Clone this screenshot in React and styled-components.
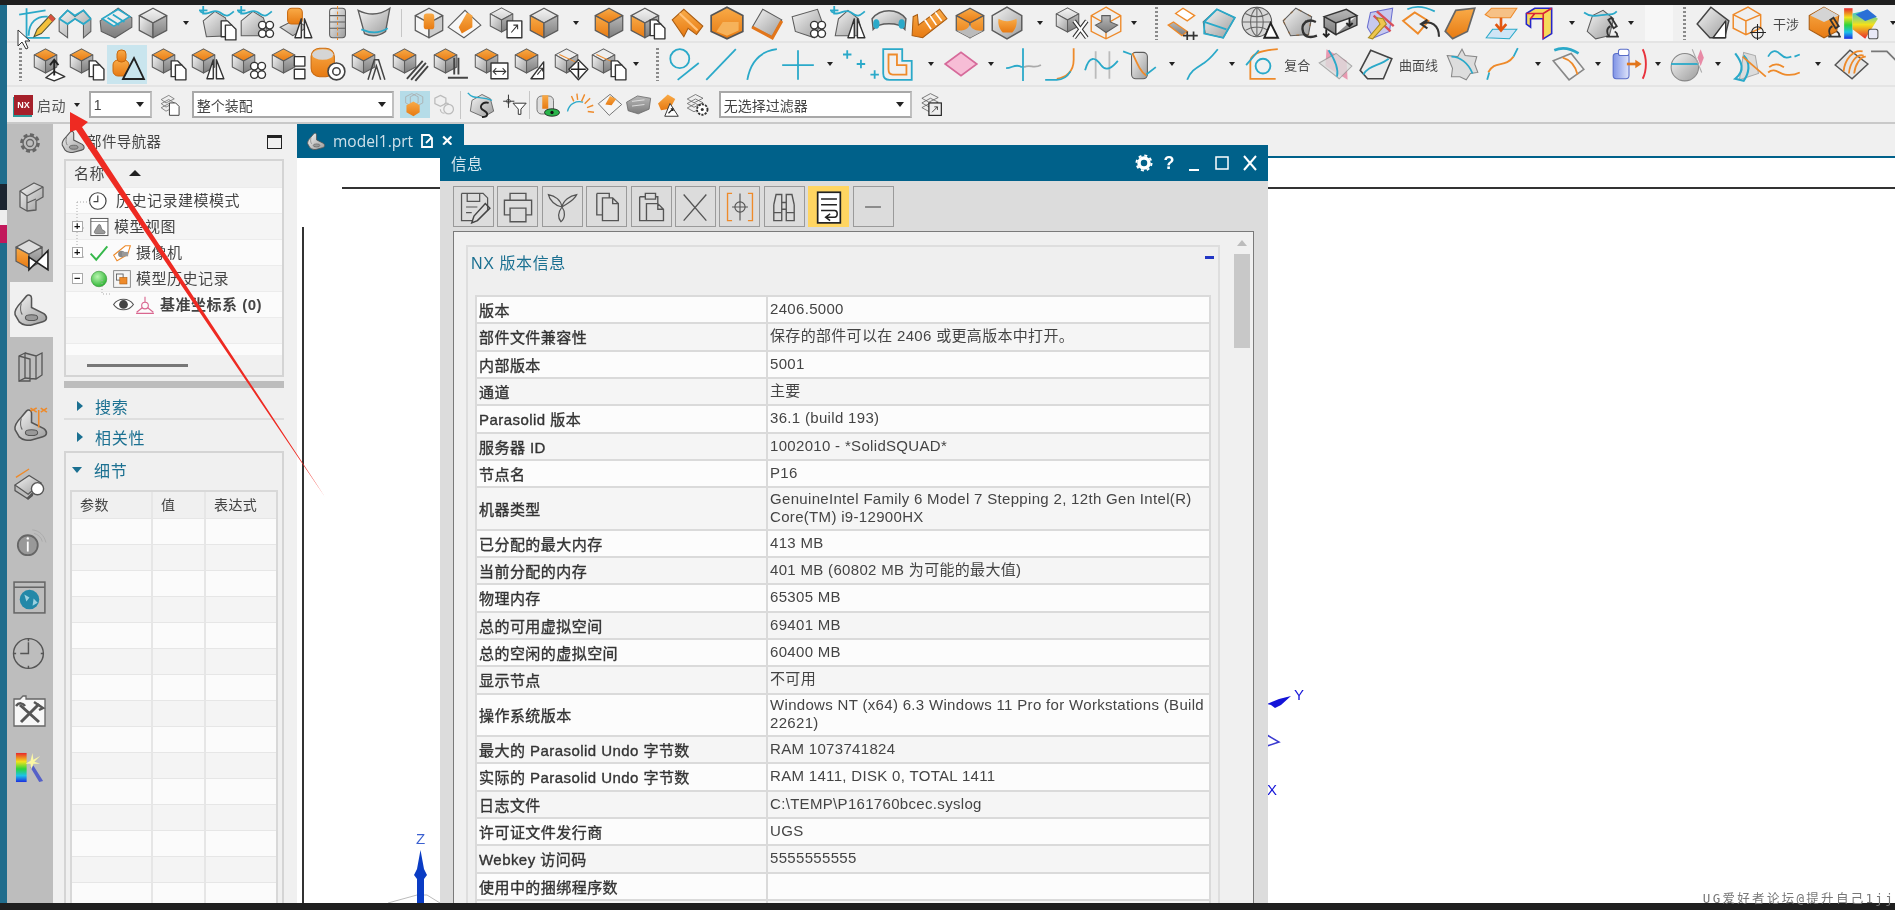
import React from "react";
import styled, { createGlobalStyle } from "styled-components";

const UI_FONT = `"Liberation Sans", "Noto Sans CJK SC", sans-serif`;
const BLUE = "#2aa9c9";
const ORANGE = "#ee8a2a";
const TEAL = "#00618a";

const GlobalStyle = createGlobalStyle`
  html, body { margin: 0; padding: 0; width: 1895px; height: 910px; overflow: hidden; background: #222; }
  #root { width: 1895px; height: 910px; }
  * { box-sizing: border-box; }
`;

const Frame = styled.div`
  position: relative;
  width: 1895px;
  height: 910px;
  overflow: hidden;
  display: flex;
  flex-direction: column;
  font-family: ${UI_FONT};
  color: #444;
  background: #f0f0f0;
  filter: blur(0.45px);
`;
const BlackBar = styled.div`
  flex: none;
  height: ${(p) => p.$h}px;
  background: #1f1f1f;
`;
const Middle = styled.div`
  flex: 1;
  min-height: 0;
  display: flex;
`;
const DesktopStrip = styled.div`
  flex: none;
  width: 7px;
  background: linear-gradient(to bottom, #1f6c8c 0 179px, #1b2430 179px 205px, #eee 205px 220px, #c2185b 220px 238px, #1f6c8c 238px);
`;
const Main = styled.div`
  flex: 1;
  min-width: 0;
  display: flex;
  flex-direction: column;
`;

/* ---- ribbon ---- */
const Ribbon = styled.div`
  flex: none;
  height: 119px;
  border-bottom: 2px solid #c9c9c9;
`;
const ToolRow = styled.div`
  display: flex;
  align-items: center;
  height: ${(p) => p.$h}px;
  border-bottom: ${(p) => (p.$line ? "2px solid #e4e4e4" : "none")};
`;
const Cell = styled.div`
  flex: none;
  width: ${(p) => p.$w}px;
  height: 100%;
  display: flex;
  align-items: center;
  justify-content: center;
  background: ${(p) => (p.$gap ? "#f7f7f7" : "transparent")};
`;
const ToolGlyph = styled.svg`
  flex: none;
  width: ${(p) => p.$s || 38}px;
  height: ${(p) => Math.round((p.$s || 38) * 0.89)}px;
  display: block;
  overflow: visible;
`;
const Hot = styled.div`
  width: 40px;
  height: 39px;
  display: flex;
  align-items: center;
  justify-content: center;
  background: #c9e5ee;
`;
const Caret = styled.i`
  display: block;
  width: 0;
  height: 0;
  border: 3.5px solid transparent;
  border-top: 4px solid #222;
  border-bottom: 0;
`;
const ComboCaret = styled(Caret)`
  border-width: 4.5px;
  border-top-width: 5px;
  border-bottom-width: 0;
`;
const Grip = styled.i`
  display: block;
  width: 3px;
  height: 33px;
  background: repeating-linear-gradient(to bottom, #8a8a8a 0 2px, transparent 2px 4px);
`;
const VRule = styled.i`
  display: block;
  width: 1px;
  height: 28px;
  background: #c6c6c6;
`;
const RowLabel = styled.span`
  font-size: 13px;
  white-space: nowrap;
  color: #4a4a4a;
`;
const ComboBox = styled.div`
  flex: none;
  width: ${(p) => p.$w}px;
  height: 27px;
  background: #fff;
  border: 2px solid #a8a8a8;
  border-right-color: #c0c0c0;
  display: flex;
  align-items: center;
  justify-content: space-between;
  padding: 0 6px 0 3px;
  font-size: 14px;
  color: #444;
`;
const HotSmall = styled(Hot)`
  width: 30px;
  height: 27px;
  background: #b5dce8;
`;
const NxLogo = styled.div`
  flex: none;
  width: 19px;
  height: 20px;
  background: #a5202a;
  color: #fff;
  font-size: 9px;
  font-weight: bold;
  text-align: center;
  line-height: 20px;
  box-shadow: -1px 2px 0 #2f9a9a;
`;
const StartLabel = styled.span`
  font-size: 14px;
  color: #555;
  letter-spacing: 0.4px;
`;

/* ---- workspace ---- */
const Workspace = styled.div`
  flex: 1;
  min-height: 0;
  display: flex;
`;
const Rail = styled.div`
  flex: none;
  width: 46px;
  background: #bdbdbd;
  display: flex;
  flex-direction: column;
`;
const RailTab = styled.div`
  flex: none;
  height: ${(p) => p.$h}px;
  margin-left: 3px;
  display: flex;
  align-items: center;
  justify-content: center;
  padding-right: 3px;
  background: ${(p) => (p.$active ? "#f0f0f0" : "transparent")};
`;
const NavPanel = styled.div`
  flex: none;
  width: 244px;
  padding: 0 13px 0 11px;
  background: #f0f0f0;
  display: flex;
  flex-direction: column;
`;
const NavHead = styled.div`
  flex: none;
  height: 35px;
  display: flex;
  align-items: center;
  font-size: 14.5px;
  color: #444;
  letter-spacing: 0.4px;
  span { flex: 1; margin: 0 0 2px 1px; }
  svg { flex: none; margin-left: -4px; }
`;
const MaxBox = styled.i`
  display: block;
  width: 15px;
  height: 14px;
  margin-right: 2px;
  border: 1.5px solid #222;
  border-top-width: 3px;
`;
const TreeBox = styled.div`
  flex: none;
  position: relative;
  height: 218px;
  border: 2px solid #d4d4d4;
  background: #f0f0f0;
  display: flex;
  flex-direction: column;
`;
const TreeHead = styled.div`
  flex: none;
  height: 26px;
  display: flex;
  align-items: center;
  gap: 24px;
  padding: 0 0 3px 8px;
  font-size: 15px;
  letter-spacing: 0.5px;
  color: #444;
  i { width: 0; height: 0; border: 6px solid transparent; border-bottom: 6px solid #222; border-top: 0; margin-top: 1px; }
`;
const TreeRow = styled.div`
  flex: none;
  height: 26px;
  position: relative;
  display: flex;
  align-items: center;
  padding-left: ${(p) => p.$indent}px;
  gap: ${(p) => p.$gap || 3}px;
  font-size: 15px;
  letter-spacing: 0.5px;
  font-weight: ${(p) => (p.$bold ? "bold" : "normal")};
  color: #444;
  white-space: nowrap;
  background: ${(p) => (p.$odd ? "#fbfbfb" : "#f5f5f5")};
  border-top: 1px solid #ececec;
`;
const TreeShort = styled(TreeRow)`
  height: 12px;
`;
const TreeText = styled.span`
  margin-left: ${(p) => p.$m || 0}px;
  margin-bottom: 3px;
`;
const Expander = styled.i`
  flex: none;
  position: relative;
  z-index: 1;
  width: 11px;
  height: 11px;
  margin-right: 3px;
  background: #fff;
  border: 1px solid #aaa;
  font-style: normal;
  font-size: 11px;
  line-height: 8px;
  text-align: center;
  color: #111;
  font-weight: bold;
`;
const TreeLines = styled.svg`
  position: absolute;
  left: 0;
  top: 0;
  width: 100%;
  height: 100%;
  pointer-events: none;
`;
const TreeScroll = styled.div`
  flex: 1;
  padding: 9px 0 0 21px;
  &::after { content: ""; display: block; width: 101px; height: 2.5px; background: #777; }
`;
const Sash = styled.div`
  flex: none;
  height: 7px;
  margin-top: 4px;
  background: #bdbdbd;
`;
const FoldHead = styled.div`
  flex: none;
  height: ${(p) => p.$h}px;
  display: flex;
  align-items: center;
  padding-left: ${(p) => p.$pad}px;
  padding-top: ${(p) => p.$top || 0}px;
  padding-bottom: ${(p) => p.$bottom || 0}px;
  gap: 12px;
  color: #1b7091;
  font-size: 16px;
  letter-spacing: 0.7px;
  border-bottom: ${(p) => (p.$line ? "2px solid #dedede" : "none")};
`;
const FoldRight = styled.i`
  width: 0; height: 0;
  border: 5.5px solid transparent;
  border-left: 6px solid #1b7091;
  border-right: 0;
`;
const FoldDown = styled.i`
  width: 0; height: 0;
  border: 5.5px solid transparent;
  border-top: 6px solid #1b7091;
  border-bottom: 0;
`;
const DetailBox = styled.div`
  flex: 1;
  min-height: 0;
  border: 2px solid #d4d4d4;
  border-bottom: 0;
  padding: 0 4px;
  display: flex;
  flex-direction: column;
  overflow: hidden;
`;
const ParamTable = styled.div`
  flex: 1;
  border: 2px solid #d8d8d8;
  border-bottom: 0;
  overflow: hidden;
`;
const ParamRow = styled.div`
  display: grid;
  grid-template-columns: 81px 53px 1fr;
  height: ${(p) => (p.$head ? 27 : 26)}px;
  background: ${(p) => (p.$head ? "#f0f0f0" : p.$odd ? "#f4f4f4" : "#fbfbfb")};
  border-bottom: 1px solid #e6e6e6;
  font-size: 14px;
  color: #444;
  letter-spacing: 0.4px;
  span { padding-left: 8px; line-height: 26px; border-right: 2px solid #e6e6e6; }
  span:last-child { border-right: 0; }
`;

/* ---- graphics window ---- */
const Viewport = styled.div`
  flex: 1;
  min-width: 0;
  position: relative;
  overflow: hidden;
  background: #fff;
`;
const TabStrip = styled.div`
  height: 34px;
  background: #f0f0f0;
  border-bottom: 2px solid ${TEAL};
`;
const ModelTab = styled.div`
  width: 167px;
  height: 34px;
  background: ${TEAL};
  display: flex;
  align-items: center;
  padding-left: 9px;
  gap: 7px;
  color: #cfe1ea;
  font-family: "Open Sans", sans-serif;
  font-size: 15.5px;
  b { color: #fff; font-size: 15px; font-family: "Liberation Sans", sans-serif; }
`;
const SheetLine = styled.div`
  position: absolute;
  background: #333;
  left: ${(p) => p.$x}px;
  top: ${(p) => p.$y}px;
  width: ${(p) => p.$w}px;
  height: ${(p) => p.$h}px;
`;
const Triad = styled.svg`
  position: absolute;
  left: 0;
  top: 0;
  width: 1598px;
  height: 779px;
`;

/* ---- information window ---- */
const InfoWindow = styled.div`
  position: absolute;
  left: 143px;
  top: 21px;
  width: 828px;
  height: 760px;
  display: flex;
  flex-direction: column;
  background: #dcdcdc;
`;
const TitleBar = styled.div`
  flex: none;
  height: 36px;
  background: ${TEAL};
  display: flex;
  align-items: center;
  padding: 0 10px 0 11px;
  color: #d4e5ed;
  font-size: 15.5px;
  letter-spacing: 0.4px;
`;
const TitleText = styled.span`
  flex: 1;
`;
const TitleButtons = styled.div`
  display: flex;
  align-items: center;
  gap: 11px;
  color: #fff;
  font-size: 18px;
  font-weight: bold;
`;
const WinToolbar = styled.div`
  flex: none;
  height: 50px;
  display: flex;
  align-items: center;
  gap: 3.4px;
  padding: 1px 0 0 13px;
`;
const WinTool = styled.div`
  flex: none;
  width: 41px;
  height: 41px;
  border: 1px solid ${(p) => (p.$on ? "#ffd561" : "#9a9a9a")};
  background: ${(p) => (p.$on ? "#ffd561" : "transparent")};
  display: flex;
  align-items: center;
  justify-content: center;
`;
const WinBody = styled.div`
  flex: 1;
  min-height: 0;
  margin: 0 14px 0 13px;
  background: #f0f0f0;
  border: 1px solid #7a7a7a;
  border-bottom: 0;
  display: flex;
  padding: 13px 0 0 12px;
`;
const Section = styled.div`
  flex: none;
  width: 754px;
  position: relative;
  border: 2px solid #dedede;
  border-bottom: 0;
  background: #efefef;
  padding: 0 6px 0 7px;
  overflow: hidden;
`;
const SectionTitle = styled.div`
  height: 48px;
  margin-left: -4px;
  padding-bottom: 18px;
  display: flex;
  align-items: center;
  color: #1b7091;
  font-size: 16px;
  letter-spacing: 0.6px;
`;
const Collapse = styled.i`
  position: absolute;
  top: 9px;
  right: 4px;
  width: 9px;
  height: 2.5px;
  background: #2236c4;
`;
const InfoTable = styled.div`
  border: 2px solid #dadada;
  border-bottom: 0;
  width: 736px;
`;
const InfoRow = styled.div`
  display: grid;
  grid-template-columns: 291px 1fr;
  height: ${(p) => (p.$tall ? 42.33 : 27.33)}px;
  border-bottom: 2px solid #dadada;
  background: ${(p) => (p.$odd ? "#f5f5f5" : "#fcfcfc")};
`;
const KeyCell = styled.div`
  display: flex;
  align-items: center;
  padding-left: 2px;
  font-size: 15px;
  letter-spacing: 0.45px;
  color: #333;
  -webkit-text-stroke: 0.35px #333;
  border-right: 2px solid #dadada;
  white-space: nowrap;
`;
const ValueCell = styled.div`
  display: flex;
  align-items: center;
  padding: 0 0 1px 2px;
  font-size: 15px;
  letter-spacing: 0.32px;
  line-height: 18px;
  color: #444;
`;
const ScrollTrack = styled.div`
  flex: none;
  width: 18px;
  margin-left: 13px;
  margin-top: -9px;
  text-align: center;
  i { display: block; width: 0; height: 0; margin: 4px auto 8px; border: 5px solid transparent; border-bottom: 6px solid #bcbcbc; border-top: 0; }
  div { width: 16px; height: 94px; margin: 0 auto; background: #c8c8c8; }
`;

/* ---- overlays ---- */
const OverlaySvg = styled.svg`
  position: absolute;
  left: 0;
  top: 0;
  width: 1895px;
  height: 910px;
  pointer-events: none;
`;
const Watermark = styled.div`
  position: absolute;
  right: 0;
  top: 888px;
  white-space: nowrap;
  font-family: "DejaVu Sans Mono", "Noto Sans CJK SC", monospace;
  font-size: 12.5px;
  letter-spacing: 2.3px;
  color: #777;
`;

/* ---- icon pieces, drawn in a 36x32 box ---- */
const G = "#5c5c5c";
const cube = (top = "url(#gTop)", left = "url(#gL)", right = "url(#gR)") => (
  <g stroke={G} strokeWidth="1.2" strokeLinejoin="round">
    <path d="M18 2 31 9 18 16 5 9Z" fill={top} />
    <path d="M5 9 18 16V30L5 23Z" fill={left} />
    <path d="M31 9 18 16V30L31 23Z" fill={right} />
  </g>
);
const small = (child) => <g transform="translate(-1 0) scale(.82)">{child}</g>;
const oCube = small(cube("url(#gO)"));
const wf = { fill: "#fff", stroke: "#333", strokeWidth: 1.3, strokeLinejoin: "round" };
const doc = (
  <>
    <path d="M21 13h6l4 4v11H21Z" {...wf} />
    <path d="M25 17h6l4 4v10H25Z" {...wf} />
  </>
);
const rings = (
  <>
    <circle cx="24" cy="18" r="3.6" {...wf} />
    <circle cx="31" cy="18" r="3.6" {...wf} />
    <circle cx="24" cy="26" r="3.6" {...wf} />
    <circle cx="31" cy="26" r="3.6" {...wf} />
  </>
);
const mirror = <path d="M17 30 23 12V30ZM26 12 33 30H26Z" {...wf} />;
const blueLine = (d) => <path d={d} fill="none" stroke={BLUE} strokeWidth="1.7" />;
const orangeLine = (d) => <path d={d} fill="none" stroke={ORANGE} strokeWidth="1.7" />;
const microscope = <path d="M22 29h12M25 29c-3-3-3-8 1-10M24 13l5 8 3-2-5-8ZM30 24c2 1 3 3 2 5" fill="none" stroke="#333" strokeWidth="1.7" />;
const triangle = <path d="M18 30 30 14V30Z" {...wf} />;
const partBody = (
  <>
    <path d="M3 21C2 17 6 12 9 9L14 3C16 1 19 2 19 5V14L31 20C35 23 34 27 30 28L19 31C16 32 10 31 7 28Z" fill="url(#gL)" stroke="#555" strokeWidth="1.500" />
    <path d="M9 10C8 14 8 18 10 21" fill="none" stroke="#666" />
    <ellipse cx="19" cy="24" rx="6" ry="2.800" fill="#999" stroke="#555" />
  </>
);

const ICONS = {
  sketchPen: (
    <>
      {blueLine("M10 2V30H32M3 8 28 4M12 28C12 15 20 9 30 10")}
      <path d="M17 29 20 22 33 8 37 12 24 26Z" fill="#f4c13c" stroke="#553" strokeWidth="1" />
      <path d="M33 8 37 12 34.500 15 30.500 11Z" fill="#d9503f" />
    </>
  ),
  extrude: (
    <>
      <path d="M3 12 11 4 18 10 26 4 33 12V24L26 30V17L18 12 11 17V30L3 24Z" fill="url(#gL)" stroke={G} />
      {blueLine("M3 12 11 4 18 9 26 4 33 12M3 12 11 17 18 12 26 17 33 12")}
    </>
  ),
  layers: (
    <>
      <path d="M3 14 20 2 33 11V20L17 30 4 24Z" fill="url(#gR)" stroke={G} />
      <path d="M5 12 20 3 31 10 16 19Z" fill="#eee" stroke={BLUE} strokeWidth="1.5" />
      {blueLine("M10 11 21 18M15 8 26 15")}
    </>
  ),
  cube: cube(),
  curveDoc: (
    <>
      <path d="M7 29 4 14 15 5 25 11 30 28Z" fill="url(#gL)" stroke={G} />
      {blueLine("M1 5C9 11 13 1 20 6S28 9 33 5M4 0V8M0 4H8")}
      <g transform="translate(0 1)">{doc}</g>
    </>
  ),
  curveRings: (
    <>
      <path d="M4 28 4 14 15 5 25 11 30 28Z" fill="url(#gL)" stroke={G} />
      {blueLine("M1 5C9 11 13 1 20 6S28 9 33 5M4 0V8M0 4H8")}
      {rings}
    </>
  ),
  cylMirror: (
    <>
      <path d="M3 20 17 13 29 20 15 28Z" fill="url(#gL)" stroke={G} />
      <rect x="10" y="2" width="14" height="15" rx="4" fill="url(#gO)" stroke="#c96a10" />
      {mirror}
    </>
  ),
  slotted: (
    <>
      <rect x="11" y="2" width="15" height="28" rx="3" fill="url(#gL)" stroke={G} />
      <path d="M11 9h15M11 15h15M11 21h15" stroke={G} />
      <path d="M18.500 0V32" stroke={ORANGE} strokeDasharray="3 2" />
    </>
  ),
  bentSheet: (
    <>
      <path d="M3 4C13 9 23 9 33 2L29 24C22 29 15 29 9 26Z" fill="url(#gL)" stroke={G} strokeWidth="1.3" />
      {blueLine("M6 22C15 26 23 26 31 21")}
    </>
  ),
  ghostCyl: (
    <>
      {cube("#eee", "#f5f5f5", "#ccc")}
      <rect x="13" y="7" width="10" height="15" rx="3" fill="url(#gO)" />
    </>
  ),
  bracket: (
    <>
      <path d="M2 20 18 4 33 18 17 30Z" fill="#f7f7f7" stroke={G} />
      <path d="M12 20 20 6 25 9V20L15 26Z" fill="url(#gO)" />
    </>
  ),
  cubeBox: (
    <>
      {small(cube())}
      <rect x="19" y="14" width="14" height="16" {...wf} />
      <path d="M23 25 29 18M25 18h4v4" fill="none" stroke="#333" />
    </>
  ),
  orangeSide: cube("url(#gTop)", "url(#gO)", "url(#gR)"),
  orangeBig: cube("url(#gO)", "url(#gO)", "url(#gR)"),
  orangeDoc: (
    <>
      <g transform="translate(-2 0)">{cube("url(#gTop)", "url(#gO)", "url(#gR)")}</g>
      {doc}
    </>
  ),
  chamfer: (
    <>
      <path d="M4 13 15 3 33 19 27 27 19 21 15 29Z" fill="url(#gO)" stroke="#a95c12" />
      <path d="M11 7 28 23" stroke="#ffc27a" strokeWidth="2" />
    </>
  ),
  hex: (
    <>
      <path d="M18 1 33 9V24L18 31 3 24V9Z" fill="url(#gO)" stroke="#555" strokeWidth="1.6" />
      <path d="M8 24 14 15H29V23L18 28Z" fill="#f6b25a" />
    </>
  ),
  plate: (
    <>
      <path d="M4 20 14 3 32 13 23 29Z" fill="url(#gL)" stroke={G} />
      <path d="M4 20 23 30 32 14" fill="none" stroke="#e2761b" strokeWidth="3" />
    </>
  ),
  plateRings: (
    <>
      <path d="M3 10 27 3 31 14 24 30 6 24Z" fill="url(#gL)" stroke={G} />
      {rings}
    </>
  ),
  curveMirror: (
    <>
      <path d="M5 28 8 12 17 4 27 12 31 28Z" fill="url(#gL)" stroke={G} />
      {blueLine("M1 5C9 11 13 1 20 6S28 9 33 5M4 0V8M0 4H8")}
      {mirror}
    </>
  ),
  elbow: (
    <>
      <path d="M2 12C10 2 26 2 34 12L33 22C27 15 9 15 3 22Z" fill="url(#gL)" stroke={G} strokeWidth="1.4" />
      <ellipse cx="6" cy="17" rx="3" ry="4.500" fill={BLUE} />
      <ellipse cx="30" cy="17" rx="3" ry="4.500" fill={BLUE} />
    </>
  ),
  thread: (
    <>
      <path d="M2 28 3 10 7 8 8 18 28 3 35 12 12 30Z" fill="url(#gO)" stroke="#a95c12" />
      <path d="M14 13 20 22M19 9 25 18M24 6 30 14" stroke="#fff" strokeWidth="1.6" />
    </>
  ),
  orangeEdge: (
    <>
      {cube("url(#gO)", "url(#gO)", "url(#gO)")}
      <path d="M5 23C14 24 18 20 18 16 18 22 24 24 31 23L18 30Z" fill="#bbb" />
    </>
  ),
  roundCube: (
    <>
      <path d="M18 1 32 9V23L18 31 4 23V9Z" fill="url(#gL)" stroke={G} strokeWidth="1.4" />
      <path d="M10 12C15 15 21 15 27 12 28 17 26 22 23 25H14C11 22 9 17 10 12Z" fill="url(#gO)" />
    </>
  ),
  cubeX: (
    <>
      {small(cube())}
      <path d="M20 14 32 30M32 14 20 30" stroke="#333" strokeWidth="4" />
      <path d="M20 14 32 30M32 14 20 30" stroke="#fff" strokeWidth="2" />
    </>
  ),
  wireCube: (
    <>
      <path d="M18 1 32 9V24L18 31 4 24V9ZM4 9 18 17 32 9M18 17V31" fill="none" stroke={ORANGE} strokeWidth="1.3" />
      <path d="M8 18 14 15V9H22V15L29 18 18 25Z" fill="url(#gR)" stroke={G} />
    </>
  ),
  twoPlates: (
    <>
      <path d="M11 7 18 2 29 9 22 14Z" fill="#fff" stroke={ORANGE} strokeWidth="1.3" />
      <path d="M4 18 9 15 22 24 17 28Z" fill="url(#gR)" stroke={ORANGE} strokeWidth="1.3" />
      <path d="M18 28h14M22 24v8M28 24v8" stroke="#333" strokeWidth="1.6" />
    </>
  ),
  blueBand: (
    <>
      <path d="M3 15 16 3 33 11 22 30 5 26Z" fill="url(#gL)" stroke={G} />
      {blueLine("M4 15 16 3 33 11 22 30 4 26ZM4 15 25 22")}
    </>
  ),
  globe: (
    <>
      <circle cx="16" cy="15" r="14" fill="#d8d8d8" stroke="#555" />
      <path d="M2 15H30M16 1V29M5 7C12 11 20 11 27 7M5 23C12 19 20 19 27 23M16 1C8 8 8 22 16 29M16 1C24 8 24 22 16 29" fill="none" stroke="#666" />
      <path d="M23 30 29 16 36 30Z" fill="#fff" stroke="#222" strokeWidth="1.8" />
    </>
  ),
  rotateSurf: (
    <>
      <path d="M3 14 15 2 30 10 27 27 10 28Z" fill="url(#gL)" stroke={ORANGE} strokeWidth="1.2" strokeDasharray="3 7" />
      <path d="M3 14 15 2 30 10 27 27 10 28Z" fill="none" stroke={G} />
      <path d="M34 15C26 11 19 17 22 25 24 30 30 30 35 28M22 18l3-4" fill="none" stroke="#333" strokeWidth="2.200" />
    </>
  ),
  boxArrows: (
    <>
      <path d="M3 10 24 3 34 9 14 16ZM3 10V20L14 27V16M34 9V18L14 27" fill="url(#gR)" stroke="#333" strokeWidth="1.4" />
      <path d="M5 22v7M2 26l3 3 3-3M27 11v8M24 16l3 3 3-3" fill="none" stroke="#222" strokeWidth="1.8" />
    </>
  ),
  wrench: (
    <>
      <path d="M9 6 30 2 27 24 12 30 6 20Z" fill="#c7c9ee" stroke="#6a6fd0" />
      <path d="M12 9 28 24M15 5 31 19" stroke="#d9505a" strokeWidth="2.200" />
      <path d="M7 30 18 17 15 11 21 12 24 17 20 21 11 31Z" fill="#eec64e" stroke="#a88a20" />
    </>
  ),
  frameUndo: (
    <>
      {blueLine("M6 3C14 -1 22 0 32 5")}
      <path d="M2 14 13 6 26 14 16 26Z" fill="none" stroke={ORANGE} strokeWidth="1.8" />
      <path d="M36 29C36 18 28 13 20 17M25 13l-6 4 6 4" fill="none" stroke="#333" strokeWidth="2" />
    </>
  ),
  brownSheet: <path d="M4 24 14 4 32 2 25 24 11 31Z" fill="url(#gO)" stroke="#666" strokeWidth="1.6" />,
  planes: (
    <>
      <path d="M3 8 9 2 33 2 27 11H8Z" fill="#f6c186" stroke={ORANGE} />
      <path d="M4 30 10 22H33L26 31Z" fill="#cfe5f6" stroke={BLUE} />
      <path d="M18 11V22M13 17l5 6 5-6" fill="none" stroke="#e2560f" strokeWidth="2.500" />
    </>
  ),
  redL: (
    <>
      <path d="M6 7 14 2 30 2V26L22 31V12H10V20L6 17Z" fill="#f6d95a" stroke="#2626c8" strokeWidth="1.500" />
      <path d="M6 7H22V31M22 7 30 2M10 12 14 7" fill="none" stroke="#d92238" strokeWidth="1.500" />
    </>
  ),
  curveScope: (
    <>
      <path d="M4 24 9 9 19 4 29 12 25 28 12 31Z" fill="url(#gL)" stroke={G} />
      {blueLine("M1 6C9 12 17 8 22 8S29 8 32 5")}
      {microscope}
    </>
  ),
  sheetTri: (
    <>
      <path d="M3 17 16 1 33 14 29 30H15Z" fill="url(#gL)" stroke="#444" strokeWidth="1.400" />
      {triangle}
    </>
  ),
  wireTarget: (
    <>
      <path d="M4 8 18 1 30 8V21L16 27 4 21ZM4 8 16 14 30 8M16 14V27" fill="none" stroke={ORANGE} strokeWidth="1.400" />
      <circle cx="27" cy="25" r="5.500" fill="none" stroke="#222" />
      <path d="M27 17V32M20 25H35" stroke="#222" />
    </>
  ),
  orangeScope: (
    <>
      <path d="M18 1 32 9 30 24 18 30 4 22 4 9Z" fill="url(#gO)" stroke="#a95c12" />
      <path d="M18 1 32 9 18 15 5 9Z" fill="#d4d4d4" />
      {microscope}
    </>
  ),
  rainbow: (
    <>
      <path d="M2 2H10V31H2Z" fill="url(#gRain)" />
      <path d="M10 7 24 4 34 12 22 31 10 22Z" fill="url(#gRain2)" />
      <path d="M13 8 24 3 33 10 22 14Z" fill="#2a6fd6" />
      <rect x="25" y="22" width="9" height="9" rx="2" fill="#e9e9f6" stroke="#555" />
    </>
  ),
  cubeUp: (
    <>
      {oCube}
      <path d="M14 29 22 23 32 28 22 32Z" {...wf} />
      <path d="M22 27V13M18 17l4-5 4 5" fill="none" stroke="#222" strokeWidth="1.800" />
    </>
  ),
  cubeDoc: <>{oCube}{doc}</>,
  cylTri: (
    <>
      <rect x="4" y="12" width="16" height="16" rx="5" fill="url(#gO)" stroke="#c96a10" />
      <rect x="8" y="2" width="9" height="12" rx="4" fill="url(#gO)" stroke="#c96a10" />
      <path d="M14 31 25 10 35 31Z" fill="#c9e5ee" stroke="#222" strokeWidth="1.800" />
    </>
  ),
  cubeMirror: <>{oCube}{mirror}</>,
  cubeRings: <>{oCube}{rings}</>,
  cubeRects: (
    <>
      {oCube}
      <rect x="24" y="9" width="10" height="9" {...wf} />
      <rect x="24" y="21" width="10" height="9" {...wf} />
    </>
  ),
  cylRing: (
    <>
      <rect x="2" y="1" width="22" height="27" rx="8" fill="url(#gO)" stroke="#c96a10" />
      <ellipse cx="13" cy="7" rx="10" ry="5" fill="#d5d5d5" />
      <circle cx="26" cy="23" r="8" fill="#fff" stroke="#444" strokeWidth="1.500" />
      <circle cx="26" cy="23" r="3.500" fill="#fff" stroke="#444" strokeWidth="1.500" />
    </>
  ),
  cubeA: (
    <>
      {oCube}
      <path d="M18 31 24 12H28L34 31M22 31 26 18 30 31" fill="none" stroke="#444" strokeWidth="1.400" />
    </>
  ),
  cubeSlash: (
    <>
      {oCube}
      <path d="M16 30 31 13M20 31 34 15M24 32 36 18" fill="none" stroke="#444" strokeWidth="1.800" />
    </>
  ),
  cubeT: (
    <>
      {oCube}
      <path d="M22 10V26M16 29H35M26 10V26" fill="none" stroke="#444" strokeWidth="1.800" />
    </>
  ),
  cubeWidth: (
    <>
      {oCube}
      <rect x="18" y="15" width="16" height="15" {...wf} />
      <path d="M21 23H31M23 20l-3 3 3 3M29 20l3 3-3 3" fill="none" stroke="#333" />
    </>
  ),
  cubeTri: (
    <>
      {oCube}
      {triangle}
      <path d="M24 26 29 20M26 20h3v3" fill="none" stroke="#333" />
    </>
  ),
  greyMove: (
    <>
      {small(cube("#eee"))}
      <path d="M7 7 22 14" stroke={ORANGE} />
      <path d="M25 12 34 21 25 31 16 21Z" {...wf} />
      <path d="M25 14V29M18 21H32" stroke="#222" strokeWidth="1.500" />
    </>
  ),
  greyDoc: (
    <>
      {small(cube("#eee"))}
      <path d="M7 7 22 14" stroke={ORANGE} />
      {doc}
    </>
  ),
  circleSlash: (
    <>
      <circle cx="14" cy="11" r="9" fill="none" stroke={BLUE} strokeWidth="1.700" />
      {blueLine("M12 31 32 15")}
    </>
  ),
  line: blueLine("M5 31 33 2"),
  arc: blueLine("M6 31C9 14 18 4 34 2"),
  plus: blueLine("M18 3V31M3 17H33"),
  points: blueLine("M4 3V11M0 7H8M17 12V20M13 16H21M30 22V30M26 26H34"),
  offset: (
    <>
      {blueLine("M4 2H22V13H31V31H10C6 31 4 29 4 25Z")}
      {orangeLine("M9 7H17V17H26V26H13C10 26 9 24 9 21Z")}
    </>
  ),
  diamond: <path d="M3 16 18 5 33 16 18 27Z" fill="#f7bdd6" stroke="#d66a9a" strokeWidth="1.600" />,
  crossWave: (
    <>
      <path d="M19 19C25 16 28 21 35 17" fill="none" stroke="#aaa" strokeWidth="1.700" />
      {blueLine("M2 20C8 20 11 15 17 19M18 1V32")}
    </>
  ),
  fillet: (
    <>
      {orangeLine("M30 1V12C30 23 23 29 14 30")}
      {blueLine("M3 31H14C19 31 24 28 27 23")}
    </>
  ),
  grayWave: (
    <>
      <path d="M12 4V30M25 4V30M2 12" stroke="#bbb" strokeWidth="1.700" fill="none" />
      {blueLine("M2 22C6 7 12 10 17 17S28 19 33 13")}
    </>
  ),
  cylCurve: (
    <>
      <rect x="10" y="5" width="15" height="25" rx="4" fill="url(#gL)" stroke={G} />
      {orangeLine("M11 6C16 17 19 24 24 27")}
      {blueLine("M2 4 10 7M24 26 33 19")}
    </>
  ),
  sCurve: blueLine("M4 31C7 22 14 19 20 15S28 8 33 2"),
  bracketCircle: (
    <>
      {orangeLine("M30 30H6V14C6 7 14 3 32 2")}
      {blueLine("M2 17 14 3")}
      <circle cx="18" cy="18" r="7" fill="none" stroke={BLUE} strokeWidth="1.800" />
    </>
  ),
  pinkPlane: (
    <>
      <path d="M9 2 28 13 29 31 8 18Z" fill="#e78aa6" opacity=".85" />
      <path d="M2 15 18 6 33 18 21 30Z" fill="#ddd" stroke="#999" opacity=".8" />
      {blueLine("M11 3C15 9 21 19 19 28")}
    </>
  ),
  sheetCurve: (
    <>
      <path d="M3 22 13 3 33 11 25 30 10 30Z" fill="#ececec" stroke="#444" strokeWidth="1.500" />
      {blueLine("M6 26C11 17 21 18 30 11")}
    </>
  ),
  starSheet: (
    <>
      <path d="M4 8 14 9 18 2 21 8 32 9 30 16 33 24 26 25 22 31 16 28 8 28 9 20Z" fill="#ddd" stroke="#888" />
      {blueLine("M8 9C16 9 24 15 28 25")}
    </>
  ),
  bicurve: (
    <>
      {orangeLine("M4 24C10 12 20 20 28 9")}
      {blueLine("M3 31 5 24M28 9 32 1")}
    </>
  ),
  plateCurve: (
    <>
      <path d="M4 13 21 6 33 21 19 31Z" fill="#f3f3f3" stroke="#888" strokeWidth="1.500" />
      {orangeLine("M13 10C20 12 25 18 27 26")}
      <path d="M5 3C12 0 20 1 28 6" fill="none" stroke={BLUE} strokeWidth="2.500" />
    </>
  ),
  cylArrow: (
    <>
      <rect x="3" y="6" width="15" height="24" rx="3" fill="url(#gBlue)" stroke="#5a6ec9" />
      <rect x="8" y="2" width="10" height="6" rx="2" fill="#fff" stroke="#5a6ec9" />
      <path d="M16 16H26" stroke="#e2761b" strokeWidth="2.500" />
      <path d="M24 12 30 16 24 20Z" fill="#e2761b" />
      <path d="M31 2C35 10 35 22 31 30" fill="none" stroke="#e8323c" strokeWidth="1.800" />
    </>
  ),
  sphere: (
    <>
      <circle cx="15" cy="19" r="13" fill="url(#gL)" stroke="#888" />
      {blueLine("M2 16H28")}
      <path d="M22 2 31 24" stroke="#aaa" />
      <path d="M30 2 33 10 30 18 27 10Z" fill="#e88aa6" />
    </>
  ),
  wingSheet: (
    <>
      <path d="M12 5 23 8 26 25 8 31Z" fill="#dcdcdc" stroke="#aaa" />
      <path d="M4 6C10 14 14 22 4 30L12 32C17 25 19 15 12 8" fill="none" stroke={BLUE} strokeWidth="2" />
      <path d="M11 9 33 28" stroke={ORANGE} strokeWidth="1.700" />
    </>
  ),
  waves: (
    <>
      {blueLine("M2 9C6 2 10 3 14 7S21 10 24 9M27 9 32 7")}
      {orangeLine("M2 24C8 19 12 25 18 26S28 26 32 24M3 19C9 14 14 17 17 19")}
    </>
  ),
  hatchPlate: (
    <>
      <path d="M3 17 17 3 34 16 19 30Z" fill="#e6e6e6" stroke="#555" strokeWidth="1.400" />
      {orangeLine("M11 23C12 12 20 2 29 4M16 25C17 15 23 6 30 8M21 25C22 16 27 9 32 9")}
    </>
  ),
  polyLine: <path d="M1 4H16L30 18V32" fill="none" stroke="#777" strokeWidth="1.700" />,

  /* third row */
  stackDoc: (
    <>
      <path d="M3 8 14 2 22 7 10 13ZM3 14 14 8 22 13 10 19ZM3 20 14 14 22 19 10 25Z" fill="#eee" stroke={G} />
      <path d="M15 13h9l5 5v13H15Z" {...wf} />
    </>
  ),
  hexOrange: (
    <>
      <path d="M14 2 22 6V14L14 18 6 14V6Z" fill="none" stroke="#aaa" />
      <path d="M20 2 28 6V14L20 18 12 14V6Z" fill="none" stroke="#aaa" />
      <path d="M16 12 24 17V26L16 31 7 26V17Z" fill="url(#gO)" />
    </>
  ),
  chain: (
    <g fill="none" stroke="#bbb" strokeWidth="1.800">
      <path d="M12 2 20 6V14L12 18 4 14V6Z" />
      <circle cx="24" cy="22" r="7" />
      <path d="M12 22a6 6 0 0 0 6 6M18 14a6 6 0 0 1 6 0" />
    </g>
  ),
  curveChain: (
    <>
      <path d="M4 24 6 11 18 4 28 9 32 24 20 31Z" fill="url(#gL)" stroke={G} />
      {blueLine("M1 2C8 11 16 5 30 11")}
      <path d="M26 14C18 12 13 20 20 23 26 26 26 31 18 31" fill="none" stroke="#222" strokeWidth="2.200" />
    </>
  ),
  crossFunnel: (
    <>
      <path d="M8 1V21M0 11H17" stroke="#333" strokeWidth="1.500" />
      <circle cx="8" cy="11" r="3" fill="none" stroke="#333" />
      <path d="M15 14H35L27 23V31H23V23Z" fill="#fff" stroke="#333" strokeWidth="1.500" />
    </>
  ),
  greenCyl: (
    <>
      <rect x="4" y="4" width="22" height="24" rx="6" fill="#ddd" stroke="#555" />
      <rect x="11" y="3" width="8" height="18" fill="url(#gO)" />
      <ellipse cx="24" cy="26" rx="10" ry="5" fill="#29b34a" stroke="#111" />
      <circle cx="24" cy="26" r="2.200" fill="#111" />
    </>
  ),
  sunArc: (
    <>
      {blueLine("M2 25C4 14 14 11 22 13")}
      <path d="M10 12 7 5M15 10 14 2M20 12 24 3M24 15 31 8M27 20 35 17M28 25 36 26" stroke={ORANGE} strokeWidth="1.800" />
    </>
  ),
  penTag: (
    <>
      <path d="M3 15 18 3 33 16 17 30Z" fill="#f5f5f5" stroke="#555" />
      <path d="M12 16 18 5 26 9 20 17Z" fill="url(#gO)" />
    </>
  ),
  greyDisc: (
    <>
      <path d="M2 13 16 5 33 8 31 22 17 28 4 24Z" fill="url(#gR)" stroke="#666" />
      <path d="M9 12 25 10M9 18 25 16" stroke="#eee" />
    </>
  ),
  orangeArrow: (
    <>
      <path d="M4 14 17 2 27 8 20 21 8 23Z" fill="url(#gO)" />
      <path d="M13 31 20 14 31 31Z" {...wf} />
      <path d="M18 27 24 21M21 21h3v3" fill="none" stroke="#222" strokeWidth="1.500" />
    </>
  ),
  stackGear: (
    <>
      <path d="M3 8 14 2 24 7 12 13ZM3 14 14 8 24 13 12 19ZM3 20 14 14 24 19 12 25Z" fill="#eee" stroke={G} />
      <circle cx="23" cy="22" r="7" fill="#fff" stroke="#333" strokeWidth="2.500" strokeDasharray="3 1.500" />
      <circle cx="23" cy="22" r="2" fill="#333" />
    </>
  ),
  stackBox: (
    <>
      <path d="M5 8 16 2 26 7 14 13ZM5 14 16 8 26 13 14 19ZM5 20 16 14 26 19 14 25Z" fill="#eee" stroke={G} />
      <rect x="14" y="14" width="16" height="16" fill="#eee" stroke="#222" strokeWidth="1.500" />
      <path d="M18 26 25 19M21 19h4v4" fill="none" stroke="#222" />
    </>
  ),

  /* rail */
  gear: (
    <>
      <circle cx="18" cy="16" r="9.500" fill="none" stroke="#666" strokeWidth="3.500" strokeDasharray="4.500 2.900" />
      <circle cx="18" cy="16" r="8" fill="none" stroke="#666" strokeWidth="1.500" />
      <circle cx="18" cy="16" r="4" fill="none" stroke="#666" strokeWidth="1.500" />
    </>
  ),
  blocks: (
    <g stroke={G} strokeLinejoin="round" strokeWidth="1.300">
      <path d="M8 12 22 4 31 8V18L24 22V31L15 32 8 28Z" fill="url(#gL)" />
      <path d="M8 12 15 17 31 8M15 17V32M15 24 24 20" fill="none" />
    </g>
  ),
  valve: (
    <>
      <g transform="scale(.95)">{cube("#ddd", "url(#gO)", "url(#gR)")}</g>
      <path d="M17 18 35 30V12L17 30Z" fill="#fff" stroke="#222" strokeWidth="1.500" />
    </>
  ),
  part: partBody,
  books: (
    <>
      <path d="M7 6 13 3V28L7 31Z" fill="none" stroke="#555" strokeWidth="1.300" />
      <path d="M13 3 24 6 30 3V25L24 29 13 28M24 6V29M7 6 18 9V31L7 31" fill="none" stroke="#555" strokeWidth="1.300" />
    </>
  ),
  partDim: (
    <>
      {partBody}
      <path d="M18 3 24 0M18 0 24 4M28 0 34 4M34 0 28 4M26 2V19" stroke={ORANGE} strokeWidth="1.500" />
    </>
  ),
  partLens: (
    <>
      <path d="M2 17 17 7 30 15 16 27Z" fill="url(#gL)" stroke="#555" strokeWidth="1.300" />
      <path d="M2 17V23L16 32 21 28" fill="none" stroke="#555" strokeWidth="1.300" />
      <path d="M3 9 17 0" stroke={ORANGE} strokeWidth="1.500" />
      <circle cx="26" cy="21" r="6.500" fill="#fff" stroke="#555" strokeWidth="1.500" />
      <path d="M21 26 15 32" stroke="#555" strokeWidth="2.500" />
    </>
  ),
  info: (
    <>
      <path d="M20 2C28 3 33 8 35 16M22 6C26 7 30 10 31 15" fill="none" stroke="#aaa" />
      <circle cx="15" cy="19" r="11" fill="#999" stroke="#666" strokeWidth="2" />
      <path d="M15 15V26" stroke="#fff" strokeWidth="2" />
      <circle cx="15" cy="11.500" r="1.300" fill="#fff" />
    </>
  ),
  browser: (
    <>
      <rect x="2" y="1" width="30" height="30" fill="none" stroke="#666" strokeWidth="1.500" />
      <path d="M2 6H32" stroke="#666" strokeWidth="1.500" />
      <circle cx="17" cy="18" r="9.500" fill="#2388a8" />
      <path d="M12 13 17 16 14 20ZM21 17 25 21 20 24Z" fill="#9cd1e0" />
    </>
  ),
  clock: (
    <>
      <circle cx="16" cy="16" r="14.500" fill="none" stroke="#555" strokeWidth="1.400" />
      <path d="M16 5V16H8M16 1V4M16 28V31M1 16H4M28 16H31" fill="none" stroke="#555" strokeWidth="1.400" />
    </>
  ),
  tools: (
    <>
      <path d="M2 4H8L11 1H14V4H33V31H2Z" fill="#f7f7f7" stroke="#666" strokeWidth="1.300" />
      <path d="M8 10 27 27M27 9 9 27" stroke="#555" strokeWidth="3" />
      <path d="M4 11C7 7 11 8 13 11M22 7 31 13 27 15" fill="none" stroke="#555" strokeWidth="2.500" />
    </>
  ),
  rainbowWand: (
    <>
      <rect x="3" y="1" width="11" height="30" fill="url(#gRain)" />
      <path d="M21 14 31 30 27 31 18 16Z" fill="#5560c8" />
      <path d="M20 1 21 8 28 4 22 10 28 12 21 12 19 18 18 12 13 12 18 9Z" fill="#fbf7a4" />
    </>
  ),

  /* tree */
  clockTree: (
    <>
      <circle cx="16" cy="16" r="13.500" fill="#fff" stroke="#444" strokeWidth="2" />
      <path d="M16 7V17H9" fill="none" stroke="#444" strokeWidth="2" />
    </>
  ),
  viewTree: (
    <>
      <rect x="3" y="2" width="28" height="28" fill="#fff" stroke="#555" strokeWidth="1.600" />
      <path d="M3 7H31" stroke="#555" />
      <path d="M9 23 15 13C16 11 19 12 19 14L21 20 26 23C27 26 26 27 24 27H12C10 27 8 26 9 23Z" fill="#999" stroke="#555" />
    </>
  ),
  check: <path d="M3 17 13 28 33 4" fill="none" stroke="#36b84b" strokeWidth="3.500" />,
  camera: (
    <>
      <path d="M3 20 24 3H33L28 19 9 30Z" fill="#fff" stroke={ORANGE} strokeWidth="2" />
      <circle cx="17" cy="18" r="6" fill="#888" />
      <rect x="18" y="14" width="11" height="8" fill="#999" />
    </>
  ),
  ball: <circle cx="18" cy="16" r="14" fill="url(#gBall)" stroke="#2c8a2c" />,
  history: (
    <>
      <rect x="3" y="1" width="30" height="30" fill="#f5f5f5" stroke="#777" strokeWidth="1.500" />
      <rect x="8" y="7" width="12" height="11" fill="none" stroke="#555" strokeWidth="1.500" />
      <rect x="14" y="13" width="13" height="12" fill={ORANGE} stroke="#a95c12" />
    </>
  ),
  eye: (
    <>
      <path d="M1 16C9 4 27 4 35 16 27 28 9 28 1 16Z" fill="#fff" stroke="#555" strokeWidth="2" />
      <circle cx="18" cy="16" r="7.500" fill="#444" />
    </>
  ),
  datum: (
    <g fill="none" stroke="#d9668f" strokeWidth="2">
      <circle cx="18" cy="17" r="6" />
      <path d="M18 1V11M13 21 3 29M23 21 33 29M2 31H34" />
    </g>
  ),
};

const WIN_ICONS = [
  <><path d="M4 3H23L27 7V18M4 3V27H14M9 3V10H20V3M8 15H18M8 20H13" fill="none" stroke="#555" strokeWidth="1.100" /><path d="M13 29 15 23 25 12 29 16 18 27Z" fill="none" stroke="#444" strokeWidth="1.300" /></>,
  <path d="M8 9V3H22V9M8 22H3V9H27V22H22M8 16H22V28H8Z" fill="none" stroke="#555" strokeWidth="1.200" />,
  <path d="M15 15C9 14 4 9 3 4 9 5 14 9 15 15ZM15 15C21 11 26 9 28 4 22 5 16 9 15 15ZM15 15C12 19 11 24 14 28 18 25 18 19 15 15Z" fill="none" stroke="#555" strokeWidth="1.100" />,
  <path d="M6 3H17V7M6 3V22H11M11 7H20L25 12V27H11ZM20 7V12H25" fill="none" stroke="#555" strokeWidth="1.200" />,
  <path d="M5 6H10M19 6H21V12M5 6V27H11M10 3H19V8H10ZM11 12H21L26 17V27H11ZM21 12V17H26" fill="none" stroke="#555" strokeWidth="1.200" />,
  <path d="M5 4 25 27M25 4 5 27" fill="none" stroke="#555" strokeWidth="1.200" />,
  <>
    <path d="M8 3H4V27H8M22 3H26V27H22" fill="none" stroke={ORANGE} strokeWidth="1.200" />
    <circle cx="15" cy="15" r="4.500" fill="none" stroke="#555" />
    <path d="M15 3V27M8 15H22" stroke="#555" />
  </>,
  <path d="M6 13 8 4H13V13M17 13V4H22L24 13M6 13V27H13V13M17 13V27H24V13M13 11H17M13 17H17M6 20H13M17 20H24" fill="none" stroke="#555" strokeWidth="1.200" />,
  <>
    <rect x="5" y="2" width="20" height="27" fill="#fff" stroke="#222" strokeWidth="1.500" />
    <path d="M8 8H22M8 13H22M8 18H20C23 18 23 24 20 24H13M16 21 12 24 16 27" fill="none" stroke="#222" strokeWidth="1.300" />
  </>,
  <path d="M8 15H22" stroke="#666" strokeWidth="1.200" />,
];

const Defs = () => (
  <svg width="0" height="0" style={{ position: "absolute" }}>
    <defs>
      <linearGradient id="gTop" x1="0" y1="0" x2="0" y2="1"><stop offset="0" stopColor="#f5f5f5" /><stop offset="1" stopColor="#cfcfcf" /></linearGradient>
      <linearGradient id="gL" x1="0" y1="0" x2="1" y2="1"><stop offset="0" stopColor="#f5f5f5" /><stop offset="1" stopColor="#9c9c9c" /></linearGradient>
      <linearGradient id="gR" x1="0" y1="0" x2="0" y2="1"><stop offset="0" stopColor="#b8b8b8" /><stop offset="1" stopColor="#7c7c7c" /></linearGradient>
      <linearGradient id="gO" x1="0" y1="0" x2="0" y2="1"><stop offset="0" stopColor="#f9ab48" /><stop offset="1" stopColor="#e77a12" /></linearGradient>
      <linearGradient id="gBlue" x1="0" y1="0" x2="1" y2="0"><stop offset="0" stopColor="#7f93e6" /><stop offset="1" stopColor="#dfe5fa" /></linearGradient>
      <linearGradient id="gRain" x1="0" y1="0" x2="0" y2="1"><stop offset="0" stopColor="#e8262c" /><stop offset=".3" stopColor="#f2e21c" /><stop offset=".55" stopColor="#2cd43c" /><stop offset=".78" stopColor="#1cc2e8" /><stop offset="1" stopColor="#1c2ee0" /></linearGradient>
      <linearGradient id="gRain2" x1="0" y1="0" x2="0" y2="1"><stop offset="0" stopColor="#1cc2e8" /><stop offset=".5" stopColor="#f2e21c" /><stop offset="1" stopColor="#e8262c" /></linearGradient>
      <radialGradient id="gBall" cx=".4" cy=".35" r=".7"><stop offset="0" stopColor="#b8f5b0" /><stop offset="1" stopColor="#28b22e" /></radialGradient>
    </defs>
  </svg>
);

const Icon = ({ name, size }) => (
  <ToolGlyph viewBox="0 0 36 32" $s={size}>{ICONS[name]}</ToolGlyph>
);

/* [x centre, what] — "^" caret, "|" rule, "#" grip, "t:" label */
const ROW_ONE = [
  [35, "sketchPen"], [75, "extrude"], [116, "layers"], [155, "cube"], [186, "^"], [216, "curveDoc"], [255, "curveRings"],
  [296, "cylMirror"], [337, "slotted"], [378, "bentSheet"], [401, "|"], [424, "ghostCyl"], [465, "bracket"], [506, "cubeBox"],
  [547, "orangeSide"], [576, "^"], [606, "orangeBig"], [648, "orangeDoc"], [687, "chamfer"], [726, "hex"], [767, "plate"],
  [809, "plateRings"], [848, "curveMirror"], [889, "elbow"], [929, "thread"], [970, "orangeEdge"], [1009, "roundCube"],
  [1040, "^"], [1069, "cubeX"], [1109, "wireCube"], [1137, "^"], [1154, "#"], [1179, "twoPlates"], [1220, "blueBand"],
  [1258, "globe"], [1300, "rotateSurf"], [1339, "boxArrows"], [1381, "wrench"], [1420, "frameUndo"], [1460, "brownSheet"],
  [1501, "planes"], [1541, "redL"], [1572, "^"], [1602, "curveScope"], [1630, "^"], [1660, "gap"], [1685, "#"],
  [1709, "sheetTri"], [1749, "wireTarget"], [1786, "t:干涉"], [1823, "orangeScope"], [1864, "rainbow"], [1893, "^"],
];

const ROW_TWO = [
  [9, "#"], [35, "cubeUp"], [75, "cubeDoc"], [116, "hot:cylTri"], [157, "cubeDoc"], [196, "cubeMirror"], [237, "cubeRings"],
  [278, "cubeRects"], [316, "cylRing"], [357, "cubeA"], [398, "cubeSlash"], [439, "cubeT"], [480, "cubeWidth"], [520, "cubeTri"],
  [559, "greyMove"], [600, "greyDoc"], [627, "^"], [644, "#"], [669, "circleSlash"], [709, "line"], [749, "arc"], [789, "plus"],
  [820, "^"], [848, "points"], [889, "offset"], [920, "^"], [950, "diamond"], [980, "^"], [1009, "crossWave"], [1050, "fillet"],
  [1091, "grayWave"], [1132, "cylCurve"], [1161, "^"], [1191, "sCurve"], [1221, "^"], [1250, "bracketCircle"], [1285, "t:复合"],
  [1325, "pinkPlane"], [1364, "sheetCurve"], [1407, "t:曲面线"], [1452, "starSheet"], [1494, "bicurve"], [1528, "^"],
  [1556, "plateCurve"], [1588, "^"], [1617, "cylArrow"], [1648, "^"], [1676, "sphere"], [1707, "^"], [1737, "wingSheet"],
  [1776, "waves"], [1808, "^"], [1837, "hatchPlate"], [1878, "polyLine"],
];

const RowItem = ({ what }) => {
  if (what === "^") return <Caret />;
  if (what === "#") return <Grip />;
  if (what === "|") return <VRule />;
  if (what === "gap") return null;
  if (what.startsWith("t:")) return <RowLabel>{what.slice(2)}</RowLabel>;
  if (what.startsWith("hot:")) return <Hot><Icon name={what.slice(4)} size={36} /></Hot>;
  return <Icon name={what} />;
};

// cell edges sit half way between the centres, the row starts at x=7
const PlacedRow = ({ items, h, line }) => (
  <ToolRow $h={h} $line={line}>
    {items.map(([x, what], i) => {
      const from = i === 0 ? 2 * x - (x + items[1][0]) / 2 : (items[i - 1][0] + x) / 2;
      const to = i === items.length - 1 ? 2 * x - from : (x + items[i + 1][0]) / 2;
      return (
        <React.Fragment key={i}>
          {i === 0 && <Cell $w={from - 7} />}
          <Cell $w={to - from} $gap={what === "gap"}><RowItem what={what} /></Cell>
        </React.Fragment>
      );
    })}
  </ToolRow>
);

const SelectionBar = () => (
  <ToolRow $h={35}>
    <Cell $w={7} />
    <NxLogo>NX</NxLogo>
    <Cell $w={4} />
    <StartLabel>启动</StartLabel>
    <Cell $w={23}><Caret /></Cell>
    <ComboBox $w={63}>1<ComboCaret /></ComboBox>
    <Cell $w={40}><Icon name="stackDoc" size={25} /></Cell>
    <ComboBox $w={202}>整个装配<ComboCaret /></ComboBox>
    <Cell $w={6} />
    <HotSmall><Icon name="hexOrange" size={28} /></HotSmall>
    <Cell $w={30}><Icon name="chain" size={25} /></Cell>
    <Cell $w={2}><VRule /></Cell>
    <Cell $w={40}><Icon name="curveChain" size={30} /></Cell>
    <Cell $w={27}><Icon name="crossFunnel" size={24} /></Cell>
    <Cell $w={1}><VRule /></Cell>
    <Cell $w={35}><Icon name="greenCyl" size={27} /></Cell>
    <Cell $w={30}><Icon name="sunArc" size={28} /></Cell>
    <Cell $w={30}><Icon name="penTag" size={28} /></Cell>
    <Cell $w={29}><Icon name="greyDisc" size={28} /></Cell>
    <Cell $w={30}><Icon name="orangeArrow" size={27} /></Cell>
    <Cell $w={29}><Icon name="stackGear" size={27} /></Cell>
    <Cell $w={6} />
    <ComboBox $w={193}>无选择过滤器<ComboCaret /></ComboBox>
    <Cell $w={41}><Icon name="stackBox" size={28} /></Cell>
  </ToolRow>
);

const RAIL_TABS = [
  ["gear", 38, 32], ["blocks", 66, 36], ["valve", 54, 38], ["part", 55, 37, true], ["books", 58, 36],
  ["partDim", 59, 37], ["partLens", 60, 34], ["info", 56, 33], ["browser", 55, 37], ["clock", 56, 37],
  ["tools", 59, 36], ["rainbowWand", 55, 35],
];

const INFO_ROWS = [
  ["版本", "2406.5000"],
  ["部件文件兼容性", "保存的部件可以在 2406 或更高版本中打开。"],
  ["内部版本", "5001"],
  ["通道", "主要"],
  ["Parasolid 版本", "36.1 (build 193)"],
  ["服务器 ID", "1002010 - *SolidSQUAD*"],
  ["节点名", "P16"],
  ["机器类型", "GenuineIntel Family 6 Model 7 Stepping 2, 12th Gen Intel(R) Core(TM) i9-12900HX", true],
  ["已分配的最大内存", "413 MB"],
  ["当前分配的内存", "401 MB (60802 MB 为可能的最大值)"],
  ["物理内存", "65305 MB"],
  ["总的可用虚拟空间", "69401 MB"],
  ["总的空闲的虚拟空间", "60400 MB"],
  ["显示节点", "不可用"],
  ["操作系统版本", "Windows NT (x64) 6.3 Windows 11 Pro for Workstations (Build 22621)", true],
  ["最大的 Parasolid Undo 字节数", "RAM 1073741824"],
  ["实际的 Parasolid Undo 字节数", "RAM 1411, DISK 0, TOTAL 1411"],
  ["日志文件", "C:\\TEMP\\P161760bcec.syslog"],
  ["许可证文件发行商", "UGS"],
  ["Webkey 访问码", "5555555555"],
  ["使用中的捆绑程序数", ""],
  ["", ""],
];

const Navigator = () => (
  <NavPanel>
    <NavHead>
      <Icon name="part" size={26} />
      <span>部件导航器</span>
      <MaxBox />
    </NavHead>
    <TreeBox>
      <TreeHead>名称<i /></TreeHead>
      <TreeRow $indent={22} $odd $gap={6}><Icon name="clockTree" size={22} /><TreeText>历史记录建模模式</TreeText></TreeRow>
      <TreeRow $indent={6}><Expander>+</Expander><Icon name="viewTree" size={22} /><TreeText>模型视图</TreeText></TreeRow>
      <TreeRow $indent={6} $odd><Expander>+</Expander><Icon name="check" size={20} /><Icon name="camera" size={20} /><TreeText $m={1}>摄像机</TreeText></TreeRow>
      <TreeRow $indent={6}><Expander>−</Expander><Icon name="ball" size={20} /><Icon name="history" size={20} /><TreeText $m={1}>模型历史记录</TreeText></TreeRow>
      <TreeRow $indent={47} $odd $bold $gap={1}><Icon name="eye" size={21} /><Icon name="datum" size={20} /><TreeText $m={4}>基准坐标系 (0)</TreeText></TreeRow>
      <TreeRow $indent={0} />
      <TreeShort $indent={0} $odd />
      <TreeScroll />
      <TreeLines>
        <path d="M11 41V96M11 96H20M11 67H20M11 41H24M36 119V133H46" fill="none" stroke="#aaa" strokeDasharray="1 2" />
      </TreeLines>
    </TreeBox>
    <Sash />
    <FoldHead $h={32} $pad={13} $top={5} $line><FoldRight />搜索</FoldHead>
    <FoldHead $h={31} $pad={13} $top={2}><FoldRight />相关性</FoldHead>
    <DetailBox>
      <FoldHead $h={37} $pad={2} $bottom={3}><FoldDown />细节</FoldHead>
      <ParamTable>
        <ParamRow $head><span>参数</span><span>值</span><span>表达式</span></ParamRow>
        {Array.from({ length: 16 }, (_, i) => (
          <ParamRow key={i} $odd={i % 2 === 1}><span /><span /><span /></ParamRow>
        ))}
      </ParamTable>
    </DetailBox>
  </NavPanel>
);

const InfoDialog = () => (
  <InfoWindow>
    <TitleBar>
      <TitleText>信息</TitleText>
      <TitleButtons>
        <svg width="18" height="18" viewBox="0 0 18 18"><circle cx="9" cy="9" r="5" fill="none" stroke="#fff" strokeWidth="3.500" /><circle cx="9" cy="9" r="7.500" fill="none" stroke="#fff" strokeWidth="2" strokeDasharray="3 2.900" /></svg>
        <span>?</span>
        <svg width="16" height="18" viewBox="0 0 16 18"><path d="M3 16H13" stroke="#fff" strokeWidth="2" /></svg>
        <svg width="18" height="18" viewBox="0 0 18 18"><rect x="3" y="3" width="12" height="12" fill="none" stroke="#fff" strokeWidth="1.500" /></svg>
        <svg width="16" height="18" viewBox="0 0 16 18"><path d="M2 2 14 16M14 2 2 16" stroke="#fff" strokeWidth="2" /></svg>
      </TitleButtons>
    </TitleBar>
    <WinToolbar>
      {WIN_ICONS.map((glyph, i) => (
        <WinTool key={i} $on={i === 8}>
          <svg width="34" height="34" viewBox="0 0 30 30">{glyph}</svg>
        </WinTool>
      ))}
    </WinToolbar>
    <WinBody>
      <Section>
        <Collapse />
        <SectionTitle>NX 版本信息</SectionTitle>
        <InfoTable>
          {INFO_ROWS.map(([key, value, tall], i) => (
            <InfoRow key={i} $tall={tall} $odd={i % 2 === 1}>
              <KeyCell>{key}</KeyCell>
              <ValueCell>{value}</ValueCell>
            </InfoRow>
          ))}
        </InfoTable>
      </Section>
      <ScrollTrack><i /><div /></ScrollTrack>
    </WinBody>
  </InfoWindow>
);

export default function App() {
  return (
    <Frame>
      <GlobalStyle />
      <Defs />
      <BlackBar $h={5} />
      <Middle>
        <DesktopStrip />
        <Main>
          <Ribbon>
            <PlacedRow items={ROW_ONE} h={38} line />
            <PlacedRow items={ROW_TWO} h={44} line />
            <SelectionBar />
          </Ribbon>
          <Workspace>
            <Rail>
              {RAIL_TABS.map(([name, h, size, active]) => (
                <RailTab key={name} $h={h} $active={active}><Icon name={name} size={size} /></RailTab>
              ))}
            </Rail>
            <Navigator />
            <Viewport>
              <TabStrip>
                <ModelTab>
                  <Icon name="part" size={20} />
                  model1.prt
                  <svg width="14" height="14" viewBox="0 0 14 14"><path d="M2 1H9L12 4V13H2ZM6 9 12 3" fill="none" stroke="#fff" strokeWidth="1.800" /></svg>
                  <b>✕</b>
                </ModelTab>
              </TabStrip>
              <SheetLine $x={5} $y={103} $w={2} $h={676} />
              <SheetLine $x={45} $y={63} $w={1553} $h={2} />
              <Triad viewBox="0 0 1598 779">
                <text x="119" y="720" fill="#3b60d0" fontSize="15" fontFamily="Liberation Sans">Z</text>
                <path d="M91 779 120 771 130 771 143 779" fill="none" stroke="#bbb" />
                <path d="M123.500 726 127 745 130 751 127 755V779H120V755L117 751 120 745Z" fill="#0a3cc4" />
                <path d="M970 580 982 575 994 572 984 581 978 584 974 581Z" fill="#1414d8" />
                <text x="997" y="576" fill="#1414d8" fontSize="15" fontFamily="Liberation Sans">Y</text>
                <path d="M970 611 982 618 970 622" fill="none" stroke="#3a3ad0" strokeWidth="1.500" />
                <text x="970" y="671" fill="#1414d8" fontSize="15" fontFamily="Liberation Sans">X</text>
              </Triad>
              <InfoDialog />
            </Viewport>
          </Workspace>
        </Main>
      </Middle>
      <BlackBar $h={7} />
      <Watermark>UG爱好者论坛@提升自己1jj</Watermark>
      <OverlaySvg viewBox="0 0 1895 910">
        <path d="M70 112 88 122 82 127 325 497 76 130 70 132Z" fill="#ee2a22" />
        <path d="M18 30V46L22 42 26 49 28 48 25 41H30Z" fill="#fff" stroke="#333" strokeWidth="1" />
      </OverlaySvg>
    </Frame>
  );
}
